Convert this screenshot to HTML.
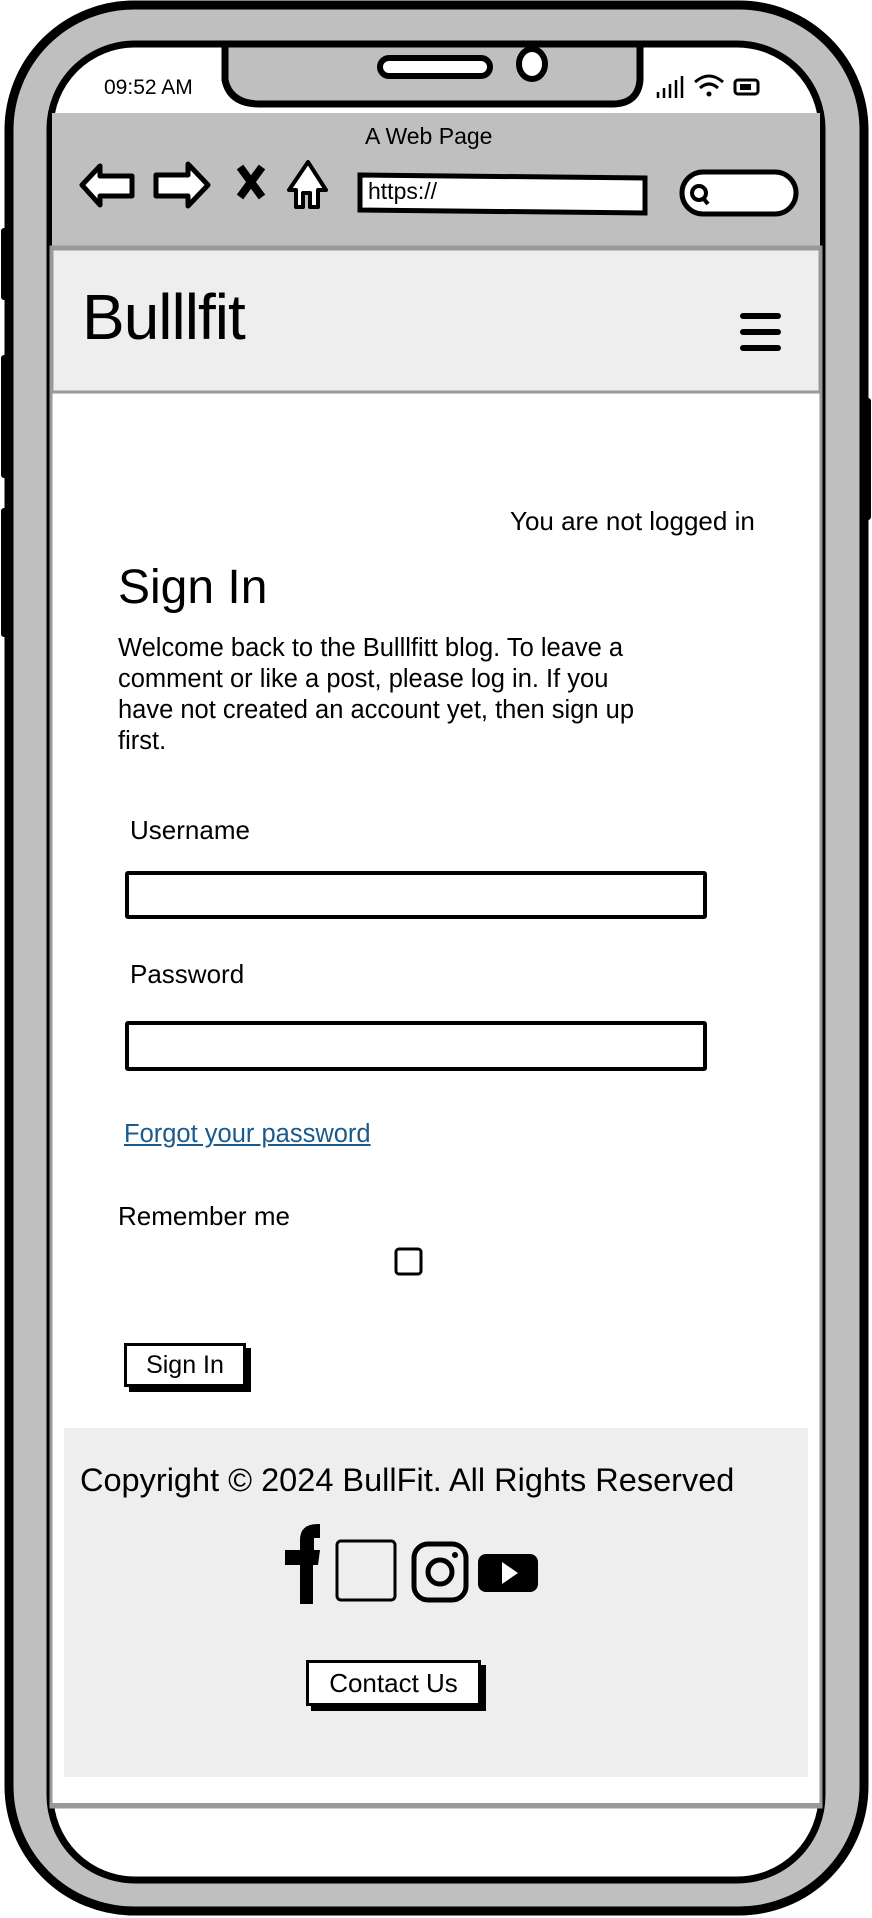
<!DOCTYPE html>
<html><head><meta charset="utf-8"><style>
*{margin:0;padding:0;box-sizing:border-box}
body{width:872px;height:1918px;background:#fff;position:relative;overflow:hidden;font-family:"Liberation Sans",sans-serif;color:#000}
.a{position:absolute;white-space:nowrap}
.inp{position:absolute;border:4px solid #000;border-radius:3px;background:#fff}
.btn{position:absolute;background:#fff;border:3px solid #000;box-shadow:5px 5px 0 #000;text-align:center}
</style></head><body>
<svg class="a" style="left:0;top:0" width="872" height="1918" viewBox="0 0 872 1918">
  <rect x="1" y="228" width="9" height="72" rx="3" fill="#000"/>
  <rect x="1" y="355" width="9" height="123" rx="3" fill="#000"/>
  <rect x="1" y="508" width="9" height="129" rx="3" fill="#000"/>
  <rect x="862" y="398" width="9" height="122" rx="3" fill="#000"/>
  <rect x="9" y="5" width="855" height="1906" rx="125" fill="#bfbfbf" stroke="#000" stroke-width="9"/>
  <rect x="50" y="44" width="772" height="1836" rx="85" fill="#fff" stroke="#000" stroke-width="7"/>
  <path d="M225 44 L225 80 Q230 104 260 104 L612 104 Q638 104 640 80 L640 44 Z" fill="#bfbfbf" stroke="#000" stroke-width="7"/>
  <rect x="380" y="58" width="110" height="18" rx="9" fill="#fff" stroke="#000" stroke-width="6"/>
  <ellipse cx="532" cy="64" rx="13" ry="15" fill="#fff" stroke="#000" stroke-width="6"/>
  <rect x="52" y="113" width="768" height="135" fill="#bfbfbf"/>
  <path d="M82 185 L100 166 L100 176 L132 176 L132 196 L100 196 L100 205 Z" fill="#fff" stroke="#000" stroke-width="5" stroke-linejoin="round"/>
  <path d="M208 185 L188 164 L188 175 L156 175 L156 196 L188 196 L188 206 Z" fill="#fff" stroke="#000" stroke-width="5" stroke-linejoin="round"/>
  <path d="M240 167 L262 197 M262 167 L240 197" stroke="#000" stroke-width="8"/>
  <path d="M308 162 L289 190 L296 190 L296 207 L303 207 L303 193 L310 193 L310 207 L318 207 L318 190 L326 190 Z" fill="#fff" stroke="#000" stroke-width="4" stroke-linejoin="round"/>
  <path d="M360 175 L645 178 L645 213 L360 210 Z" fill="#fff" stroke="#000" stroke-width="5"/>
  <rect x="682" y="172" width="114" height="42" rx="21" fill="#fff" stroke="#000" stroke-width="5"/>
  <circle cx="699" cy="193" r="7" fill="none" stroke="#000" stroke-width="4"/>
  <path d="M703 198 L708 204" stroke="#000" stroke-width="4"/>
  <path d="M658 98v-6M664 98v-10M670 98v-14M676 98v-18M682 98v-22" stroke="#000" stroke-width="2.5"/>
  <path d="M695 82 Q709 70 723 82 M700 88 Q709 80 718 88" fill="none" stroke="#000" stroke-width="3"/>
  <circle cx="709" cy="94" r="2.5"/>
  <rect x="735" y="80" width="23" height="14" rx="3" fill="none" stroke="#000" stroke-width="3"/>
  <rect x="740" y="84" width="11" height="6" fill="#000"/>
  <rect x="51" y="247" width="770" height="1560" fill="#fff" stroke="#999" stroke-width="3"/>
  <rect x="52" y="249" width="768" height="143" fill="#eee" stroke="#999" stroke-width="3"/>
  <rect x="740" y="313" width="41" height="6" rx="3"/>
  <rect x="740" y="329" width="41" height="6" rx="3"/>
  <rect x="740" y="345" width="41" height="6" rx="3"/>
  <rect x="64" y="1428" width="744" height="349" fill="#eee"/>
  <rect x="396" y="1249" width="25" height="25" rx="3" fill="#fff" stroke="#000" stroke-width="3"/>
  <path d="M300 1604 V1565 H285 V1550 H300 V1540 Q300 1524 318 1524 H320 V1538 H314 V1550 H320 L318 1565 H313 V1604 Z" fill="#000"/>
  <rect x="337" y="1541" width="58" height="59" rx="4" fill="none" stroke="#000" stroke-width="3"/>
  <rect x="414" y="1544" width="52" height="56" rx="14" fill="none" stroke="#000" stroke-width="5"/>
  <circle cx="440" cy="1572" r="12" fill="none" stroke="#000" stroke-width="5"/>
  <circle cx="455" cy="1555" r="3" fill="#000"/>
  <rect x="478" y="1554" width="60" height="38" rx="8" fill="#000"/>
  <path d="M502 1562 L518 1573 L502 1584 Z" fill="#fff"/>
  <path d="M51 1805 H821" stroke="#999" stroke-width="4"/>
</svg>
<div class="a" style="left:104px;top:76px;font-size:21px">09:52 AM</div>
<div class="a" style="left:365px;top:123px;font-size:23px">A Web Page</div>
<div class="a" style="left:368px;top:178px;font-size:23px">https://</div>
<div class="a" style="left:82px;top:280px;font-size:64px;letter-spacing:-1px">Bulllfit</div>
<div class="a" style="left:510px;top:506px;font-size:26px">You are not logged in</div>
<div class="a" style="left:118px;top:560px;font-size:48px">Sign In</div>
<div class="a" style="left:118px;top:633px;font-size:25.5px;line-height:31px">Welcome back to the Bulllfitt blog. To leave a<br>comment or like a post, please log in. If you<br>have not created an account yet, then sign up<br>first.</div>
<div class="a" style="left:130px;top:815px;font-size:26px">Username</div>
<div class="inp" style="left:125px;top:871px;width:582px;height:48px"></div>
<div class="a" style="left:130px;top:959px;font-size:26px">Password</div>
<div class="inp" style="left:125px;top:1021px;width:582px;height:50px"></div>
<div class="a" style="left:124px;top:1120px;font-size:25.5px;color:#1b5a8c;text-decoration:underline">Forgot your password</div>
<div class="a" style="left:118px;top:1201px;font-size:26px">Remember me</div>
<div class="btn" style="left:124px;top:1343px;width:122px;height:44px;font-size:25px;line-height:38px">Sign In</div>
<div class="a" style="left:80px;top:1462px;font-size:32.5px">Copyright © 2024 BullFit. All Rights Reserved</div>
<div class="btn" style="left:306px;top:1660px;width:175px;height:46px;font-size:26px;line-height:40px">Contact Us</div>
</body></html>
